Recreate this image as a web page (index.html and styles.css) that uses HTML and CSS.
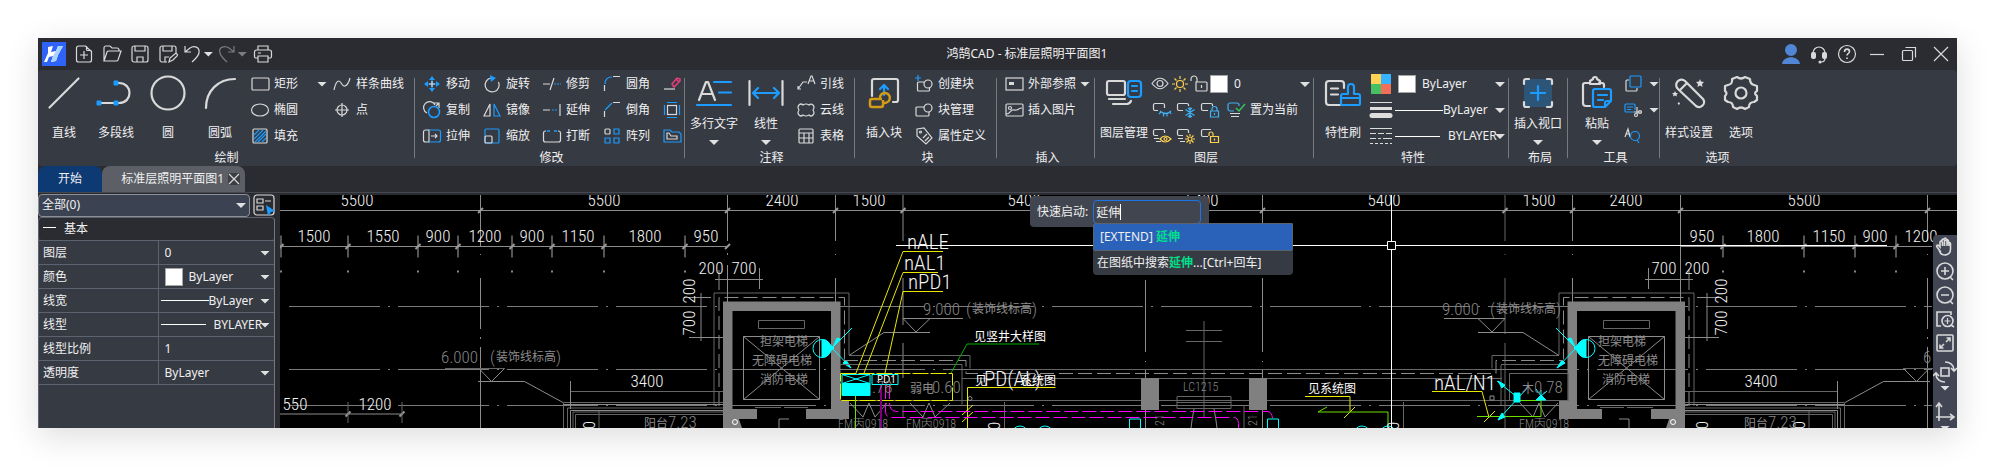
FILE: index.html
```html
<!DOCTYPE html>
<html lang="zh-CN">
<head>
<meta charset="utf-8">
<title>鸿鹄CAD - 标准层照明平面图1</title>
<link rel="stylesheet" href="styles.css">
</head>
<body>
<main class="window">
  <header class="titlebar">
    <nav class="quick" aria-label="快速访问">
      <svg class="logo" viewBox="0 0 24 24"><rect width="24" height="24" fill="#2f62f6"/><path d="M6 5l5-1-2 6 5-1 2-5h5l-5 9-2 6-5 1 2-6-4 1-2 5H2l4-9z" fill="#fff"/><path d="M14 9l2-5h5l-5 9-2 6-5 1 2-6z" fill="#a9d3ff"/></svg>
      <button aria-label="新建"><svg viewBox="0 0 20 20"><path class="w" d="M11.500 2H4.500A2 2 0 0 0 2.500 4v12a2 2 0 0 0 2 2h11a2 2 0 0 0 2-2V7.500zM12.500 2v3.500a1 1 0 0 0 1 1h4M10 7v8M6 11h8"/></svg></button>
      <button aria-label="打开"><svg viewBox="0 0 20 20"><path class="w" d="M2 17V4a2 2 0 0 1 2-2h4l2 2h5a2 2 0 0 1 2 2v1M2 17h12a2 2 0 0 0 2-1l3-9H7a2 2 0 0 0-2 1z"/></svg></button>
      <button aria-label="保存"><svg viewBox="0 0 20 20"><path class="w" d="M4 2h12a2 2 0 0 1 2 2v12a2 2 0 0 1-2 2H4a2 2 0 0 1-2-2V4a2 2 0 0 1 2-2zM5 2v5h10V2M7 18v-5h6v5"/></svg></button>
      <button aria-label="另存为"><svg viewBox="0 0 20 20"><path class="w" d="M9 18H4a2 2 0 0 1-2-2V4a2 2 0 0 1 2-2h12a2 2 0 0 1 2 2v5M5 2v5h9V2M7 18v-5h4M11 18l1-4 6-5 2 2-5 5z"/></svg></button>
      <button class="split" aria-label="撤销"><svg viewBox="0 0 20 20"><path class="w" d="M2 2v6h6M2 8l5-4c4-3 10-1 9 5-1 4-4 6-7 9"/></svg><i class="caret"></i></button>
      <button class="split faded" aria-label="重做"><svg viewBox="0 0 20 20"><path class="w" d="M17 2v6h-6M17 8l-5-4C8 1 1 3 3 9c1 4 4 6 7 9"/></svg><i class="caret"></i></button>
      <button aria-label="打印"><svg viewBox="0 0 20 20"><path class="w" d="M5 6V2h10v4M5 14H3a1.500 1.500 0 0 1-1.500-1.500V8A2 2 0 0 1 3.500 6h13a2 2 0 0 1 2 2v4.500A1.500 1.500 0 0 1 17 14h-2M5 12h10v6H5zM5 9h3"/></svg></button>
    </nav>
    <h1 class="title">鸿鹄CAD - 标准层照明平面图1</h1>
    <nav class="winctl" aria-label="窗口">
      <button aria-label="用户"><svg viewBox="0 0 20 20"><path fill="#5186d6" d="M10 0a6 6 0 1 1 0 12A6 6 0 0 1 10 0zM1 20c1-9 17-9 18 0z"/></svg></button>
      <button aria-label="客服"><svg viewBox="0 0 20 20"><path class="w" d="M4 9a6 6 0 0 1 12 0M16 14c0 3-2 4-4 4"/><rect x="2" y="8" width="5" height="7" rx="2" fill="#d9d9d9"/><rect x="13" y="8" width="5" height="7" rx="2" fill="#d9d9d9"/><circle cx="11" cy="18" r="1.500" fill="#d9d9d9"/></svg></button>
      <button aria-label="帮助"><svg viewBox="0 0 20 20"><circle class="w" cx="10" cy="10" r="8.500"/><path class="w k" d="M7.500 8c0-4 5-3.500 5-.5 0 2-2.500 2-2.500 4M10 13.500v1.500"/></svg></button>
      <button class="wide" aria-label="最小化"><svg viewBox="0 0 20 20"><path class="w" d="M3 10.500h14"/></svg></button>
      <button class="wide" aria-label="还原"><svg viewBox="0 0 20 20"><rect class="w" x="3.500" y="6.500" width="10" height="10" rx="1"/><path class="w" d="M6.500 3.500h10v10"/></svg></button>
      <button class="wide" aria-label="关闭"><svg viewBox="0 0 20 20"><path class="w" d="M3 3l14 14M17 3L3 17"/></svg></button>
    </nav>
  </header>

  <section class="ribbon" aria-label="功能区">
    <section class="group g-draw">
      <div class="tools">
        <button class="big"><svg viewBox="0 0 40 40"><path class="w k2" d="M5.500 34.500l29-29"/></svg>直线</button>
        <button class="big"><svg viewBox="0 0 40 40"><path class="w k2" d="M3 30h20c14 0 14-20 0-20h-3"/><path fill="#1c9cff" d="M1 28h4v4H1zM18 28h4v4h-4zM18 8h4v4h-4z" stroke="#1c9cff"/></svg>多段线</button>
        <button class="big"><svg viewBox="0 0 40 40"><circle class="w k2" cx="20" cy="20" r="16.500"/></svg>圆</button>
        <button class="big"><svg viewBox="0 0 40 40"><path class="w k2" d="M6 35C6 18 18 6 35 6"/></svg>圆弧</button>
        <div class="col c-shape">
          <button class="sm"><svg viewBox="0 0 20 20"><rect class="w" x="2" y="4" width="17" height="12" rx="1"/></svg>矩形<i class="caret far"></i></button>
          <button class="sm"><svg viewBox="0 0 20 20"><ellipse class="w" cx="10" cy="10" rx="8.500" ry="6"/></svg>椭圆</button>
          <button class="sm"><svg viewBox="0 0 20 20"><rect class="w" x="3" y="3" width="14" height="14" rx="1"/><path class="b" d="M4 9l5-5M4 13l9-9M5 16L16 5M8 16l8-8M12 16l4-4"/></svg>填充</button>
        </div>
        <div class="col">
          <button class="sm"><svg viewBox="0 0 20 20"><path class="w" d="M2 16c1-5 3-9 5-9s3 6 6 5 4-4 5-8"/></svg>样条曲线</button>
          <button class="sm"><svg viewBox="0 0 20 20"><circle class="w" cx="10" cy="10" r="5"/><path class="w" d="M10 3v14M3 10h14"/></svg>点</button>
        </div>
      </div>
      <h2>绘制</h2>
    </section>

    <section class="group g-modify">
      <div class="tools">
        <div class="col">
          <button class="sm"><svg viewBox="0 0 20 20"><path class="b" d="M10 3v14M3 10h14"/><path fill="#1c9cff" d="M10 2l3 4H7zM10 18l3-4H7zM2 10l4-3v6zM18 10l-4-3v6z"/><path class="w" d="M10 7v6M7 10h6"/></svg>移动</button>
          <button class="sm"><svg viewBox="0 0 20 20"><path class="w" d="M5 13a6 6 0 1 1 8-8M12 3h5v5M17 3l-3 3"/><circle class="b k" cx="12" cy="12" r="5.500"/></svg>复制</button>
          <button class="sm"><svg viewBox="0 0 20 20"><path class="w" d="M7 4H3.500A2 2 0 0 0 1.500 6v8a2 2 0 0 0 2 2H7zM9 10h6M13 8l2 2-2 2"/><path class="b" d="M7 4h9.500a2 2 0 0 1 2 2v8a2 2 0 0 1-2 2H7"/></svg>拉伸</button>
        </div>
        <div class="col">
          <button class="sm"><svg viewBox="0 0 20 20"><path class="w" d="M16.500 8A7 7 0 1 1 9 4"/><path fill="#1c9cff" d="M8 1l6 3-5 4z"/></svg>旋转</button>
          <button class="sm"><svg viewBox="0 0 20 20"><path class="w" d="M8 4v12H2z"/><path class="b" d="M12 4v12h6z"/></svg>镜像</button>
          <button class="sm"><svg viewBox="0 0 20 20"><rect class="b" x="3" y="3" width="14" height="14" rx="1"/><rect class="w" x="3" y="10" width="7" height="7" rx="1"/></svg>缩放</button>
        </div>
        <div class="col">
          <button class="sm"><svg viewBox="0 0 20 20"><path class="w" d="M1 10h7M8 16l4-12"/><path class="b" stroke-dasharray="2 1" d="M12 10h7"/></svg>修剪</button>
          <button class="sm"><svg viewBox="0 0 20 20"><path class="w" d="M1 10h7M18 4v12"/><path class="b" stroke-dasharray="2 1" d="M10 10h6"/></svg>延伸</button>
          <button class="sm"><svg viewBox="0 0 20 20"><path class="w" d="M4 5H3.500A2 2 0 0 0 1.500 7v7a2 2 0 0 0 2 2h13a2 2 0 0 0 2-2V7a2 2 0 0 0-2-2H16"/><path class="b k" d="M5 5h3M12 5h3"/></svg>打断</button>
        </div>
        <div class="col">
          <button class="sm"><svg viewBox="0 0 20 20"><path class="b" d="M3 10c0-5 3-7 7-7"/><path class="w" d="M2.500 17v-6M11 2.500h7"/></svg>圆角</button>
          <button class="sm"><svg viewBox="0 0 20 20"><path class="b" d="M3 10l7-7"/><path class="w" d="M2.500 17v-6M11 2.500h7"/></svg>倒角</button>
          <button class="sm"><svg viewBox="0 0 20 20"><rect class="w" x="3" y="3" width="5" height="5" rx="1"/><path class="b" d="M12 3h5v5h-5zM12 12h5v5h-5zM3 12h5v5H3z"/></svg>阵列</button>
        </div>
        <div class="col icons">
          <button class="sm" aria-label="删除"><svg viewBox="0 0 20 20"><path class="w" d="M2 15h11"/><path d="M10 10l5-6 3 1v2l-6 6zM14 5l3 3" fill="none" stroke="#e83e7b" stroke-width="1.500"/></svg></button>
          <button class="sm" aria-label="偏移"><svg viewBox="0 0 20 20"><rect class="w" x="5.500" y="5.500" width="9" height="9"/><path class="b" d="M5 2.500h10M5 17.500h10M2.500 5v10M17.500 5v10"/></svg></button>
          <button class="sm" aria-label="编辑"><svg viewBox="0 0 20 20"><path class="b" d="M2 4h6l2 2h7l2 2v8H2z"/><path class="w" d="M5 7h2l2 3h6v3H5z"/></svg></button>
        </div>
      </div>
      <h2>修改</h2>
    </section>

    <section class="group g-note">
      <div class="tools">
        <button class="big"><svg viewBox="0 0 40 40"><path class="w k2" d="M5 27L12 9h2l7 18M8 21h10"/><path class="b k2" d="M20 9h17M25 19.500h12M3 32h34"/></svg>多行文字<i class="caret"></i></button>
        <button class="big"><svg viewBox="0 0 40 40"><path class="w k2" d="M3.500 8v24M36.500 8v24"/><path class="b k2" d="M7 20h26M12 15l-5 5 5 5M28 15l5 5-5 5"/></svg>线性<i class="caret"></i></button>
        <div class="col">
          <button class="sm"><svg viewBox="0 0 20 20"><path class="w" d="M2 15l5-7h4M2 12v3h3M12 10l3-8h1l3 8M13 7h5"/></svg>引线</button>
          <button class="sm"><svg viewBox="0 0 20 20"><path class="w" d="M3 5q2-2 4 0q3-2 6 0q2-2 4 0q2 2 0 5q2 3 0 5q-2 2-4 0q-3 2-6 0q-2 2-4 0q-2-2 0-5q-2-3 0-5"/></svg>云线</button>
          <button class="sm"><svg viewBox="0 0 20 20"><rect class="w" x="3" y="3" width="14" height="14" rx="1"/><path class="w" d="M3 7h14M3 12h14M8 7v10M13 7v10"/></svg>表格</button>
        </div>
      </div>
      <h2>注释</h2>
    </section>

    <section class="group g-block">
      <div class="tools">
        <button class="big"><svg viewBox="0 0 40 40"><path class="w k2" d="M8 23V8a2 2 0 0 1 2-2h22a2 2 0 0 1 2 2v19a2 2 0 0 1-2 2h-3"/><path class="b k2" d="M20 22V13M16 16l4-4 4 4"/><path d="M18 26H8a2 2 0 0 0-2 2v4a2 2 0 0 0 2 2h9a2 2 0 0 0 2-2v-5M18 29a5 5 0 1 0-2-3" fill="none" stroke="#d49b16" stroke-width="2.500"/></svg>插入块</button>
        <div class="col">
          <button class="sm"><svg viewBox="0 0 20 20"><path class="w" d="M10 8H4.500A1 1 0 0 0 3.500 9v7a1 1 0 0 0 1 1h10a1 1 0 0 0 1-1v-3"/><circle class="w" cx="14" cy="10" r="4"/><path class="b" d="M4 1v6M1 4h6"/></svg>创建块</button>
          <button class="sm"><svg viewBox="0 0 20 20"><path class="w" d="M10 7H3a1 1 0 0 0-1 1v7a1 1 0 0 0 1 1h11a1 1 0 0 0 1-1v-3"/><circle class="w" cx="14" cy="8" r="4"/></svg>块管理</button>
          <button class="sm"><svg viewBox="0 0 20 20"><path class="w" d="M3 3l7-1 8 10-6 6L3 10z"/><circle class="w" cx="6.500" cy="6" r="1"/><path class="w" d="M9 12l4-4M11 15l4-4"/></svg>属性定义</button>
        </div>
      </div>
      <h2>块</h2>
    </section>

    <section class="group g-insert">
      <div class="tools">
        <div class="col">
          <button class="sm"><svg viewBox="0 0 20 20"><rect class="w" x="2" y="4" width="17" height="12"/><path fill="#d9d9d9" d="M5 8h5v3H5z"/></svg>外部参照<i class="caret"></i></button>
          <button class="sm"><svg viewBox="0 0 20 20"><rect class="w" x="2" y="4" width="17" height="12" rx="1"/><path class="w" d="M2 14c5 0 4-5 8-4s4-2 8-2"/><circle class="w" cx="6" cy="8" r="1.500"/></svg>插入图片</button>
        </div>
      </div>
      <h2>插入</h2>
    </section>

    <section class="group g-layer">
      <div class="tools">
        <button class="big"><svg viewBox="0 0 40 40"><rect class="w k2" x="3" y="8" width="18" height="14" rx="2"/><path class="w k2" d="M5 26h16M9 31h14a5 5 0 0 0 4-3"/><rect class="b k2" x="24" y="8" width="13" height="16" rx="3"/><path class="b k2" d="M28 13h5M28 18h5"/></svg>图层管理</button>
        <div class="col">
          <div class="row">
            <svg class="i" viewBox="0 0 20 20"><path class="w" d="M2 9.500Q10-1 18 9.500Q10 20 2 9.500z"/><circle class="w" cx="10" cy="9.500" r="3"/></svg>
            <svg class="i" viewBox="0 0 20 20"><circle class="y" cx="10" cy="10" r="3.500"/><path class="y" d="M10 2v3M10 15v3M2 10h3M15 10h3M4.500 4.500l2 2M13.500 13.500l2 2M15.500 4.500l-2 2M6.500 13.500l-2 2"/></svg>
            <svg class="i" viewBox="0 0 20 20"><path class="w" d="M6 8h10a1 1 0 0 1 1 1v7a1 1 0 0 1-1 1H7a1 1 0 0 1-1-1zM7 8V5a3 3 0 0 0-6 0v2M11.500 11v3"/></svg>
            <label class="pick layerpick"><span class="swatch"></span><select aria-label="当前图层"><option>0</option></select></label>
          </div>
          <div class="row tight">
            <button class="i" aria-label="关闭图层"><svg viewBox="0 0 20 20"><path class="w" d="M6 10.500H3a1.500 1.500 0 0 1-1.500-1.500V5A1.500 1.500 0 0 1 3 3.500h8A1.500 1.500 0 0 1 12.500 5v3"/><path class="b l" d="M8 11q6 5 11 0M9 12l-2 2M11.500 13.500v3M15 13.500v3M18 12l1 2"/></svg></button>
            <button class="i" aria-label="冻结图层"><svg viewBox="0 0 20 20"><path class="w" d="M7 10.500H3a1.500 1.500 0 0 1-1.500-1.500V5A1.500 1.500 0 0 1 3 3.500h8A1.500 1.500 0 0 1 12.500 5v1"/><path class="b l" d="M14 7v11M9.500 9.500l9 6M9.500 15.500l9-6M12 8l2 2 2-2M12 17l2-2 2 2"/></svg></button>
            <button class="i" aria-label="锁定图层"><svg viewBox="0 0 20 20"><path class="w" d="M8 10.500H3a1.500 1.500 0 0 1-1.500-1.500V5A1.500 1.500 0 0 1 3 3.500h8A1.500 1.500 0 0 1 12.500 5v1"/><path class="b l" d="M10.500 11h8v6h-8zM12 11V9a2.500 2.500 0 0 1 5 0v2M14.500 13v2"/></svg></button>
            <button class="sm cur"><svg viewBox="0 0 20 20"><path class="b l" d="M8 11H4a2 2 0 0 1-2-2V5a2 2 0 0 1 2-2h7a2 2 0 0 1 2 2v1"/><path class="w" d="M4 13.500h10M5 16.500h8"/><path d="M10 8l3 3 6-7" fill="none" stroke="#35c759" stroke-width="1.500"/></svg>置为当前</button>
          </div>
          <div class="row tight">
            <button class="i" aria-label="打开图层"><svg viewBox="0 0 20 20"><path class="w" d="M6 9.500H3A1.500 1.500 0 0 1 1.500 8V5A1.500 1.500 0 0 1 3 3.500h8A1.500 1.500 0 0 1 12.500 5v2M2 12.500h5M4 15.500h5"/><path class="y" d="M8 13q5-6 11 0q-6 6-11 0z"/><circle class="y" cx="13.500" cy="13" r="1.500"/></svg></button>
            <button class="i" aria-label="解冻图层"><svg viewBox="0 0 20 20"><path class="w" d="M7 9.500H3A1.500 1.500 0 0 1 1.500 8V5A1.500 1.500 0 0 1 3 3.500h8A1.500 1.500 0 0 1 12.500 5v2M2 12.500h5M4 15.500h5"/><circle class="y" cx="14" cy="13" r="2"/><path class="y" d="M14 8v2M14 16v2M9 13h2M17 13h2M10.500 9.500l1.500 1.500M17.500 9.500L16 11M10.500 16.500L12 15M17.500 16.500L16 15"/></svg></button>
            <button class="i" aria-label="解锁图层"><svg viewBox="0 0 20 20"><path class="w" d="M8 10.500H3a1.500 1.500 0 0 1-1.500-1.500V5A1.500 1.500 0 0 1 3 3.500h8"/><path class="y" d="M10.500 10.500h8v6h-8zM13 10.500V8a2 2 0 0 0-4 0v2M14.500 12.500v2"/></svg></button>
          </div>
        </div>
      </div>
      <h2>图层</h2>
    </section>

    <section class="group g-prop">
      <div class="tools">
        <button class="big"><svg viewBox="0 0 40 40"><path class="w k2" d="M17 32H6a3 3 0 0 1-3-3V11a3 3 0 0 1 3-3h12a3 3 0 0 1 3 3v4M8 15.500h7M8 21.500h7"/><path class="b k2" d="M18 31V23a2 2 0 0 1 2-2h5v-7a3 3 0 0 1 6 0v7h4a2 2 0 0 1 2 2v8a1 1 0 0 1-1 1H19a1 1 0 0 1-1-1zM18 25h19"/></svg>特性刷</button>
        <div class="props">
          <div class="row"><svg class="pi" viewBox="0 0 24 20"><path fill="#ffd155" d="M2 0h10v10H2z"/><path fill="#36b4ff" d="M12 0h10v10H12z"/><path fill="#45c163" d="M2 10h10v10H2z"/><path fill="#f07059" d="M12 10h10v10H12z"/></svg><label class="pick"><span class="swatch"></span><select aria-label="颜色"><option>ByLayer</option></select></label></div>
          <div class="row"><svg class="pi" viewBox="0 0 24 20"><path stroke="#ddd" d="M1 2.500h22"/><path stroke="#ddd" stroke-width="3" d="M1 8.500h22"/><path stroke="#ddd" stroke-width="5" stroke-linecap="round" d="M3 15.500h18"/></svg><label class="pick"><span class="line"></span><select aria-label="线宽"><option>ByLayer</option></select></label></div>
          <div class="row"><svg class="pi" viewBox="0 0 24 20"><path stroke="#ddd" stroke-width="1" d="M1 2.500h22M1 7.500h6m2 0h6m2 0h6M1 12.500h6m2 0h3m2 0h9M1 17.500h3m2 0h3m2 0h3m2 0h3m2 0h2"/></svg><label class="pick"><span class="line short"></span><select aria-label="线型"><option>BYLAYER</option></select></label></div>
        </div>
      </div>
      <h2>特性</h2>
    </section>

    <section class="group g-layout">
      <div class="tools">
        <button class="big"><svg viewBox="0 0 40 40"><rect x="6" y="6" width="28" height="28" rx="2" fill="#2d5578"/><path class="b k2" d="M20 13v14M13 20h14"/><path class="w k2" d="M6 11V8a2 2 0 0 1 2-2h3M29 6h3a2 2 0 0 1 2 2v3M34 29v3a2 2 0 0 1-2 2h-3M11 34H8a2 2 0 0 1-2-2v-3"/></svg>插入视口<i class="caret"></i></button>
      </div>
      <h2>布局</h2>
    </section>

    <section class="group g-tool">
      <div class="tools">
        <button class="big"><svg viewBox="0 0 40 40"><path class="w k2" d="M13 33H9a3 3 0 0 1-3-3V12a2 2 0 0 1 2-2h5M22 10h3a2 2 0 0 1 2 2v2M13 8l3-2a2 2 0 0 1 4 0l3 2v3H13z"/><path class="b k2" d="M18 16h14a2 2 0 0 1 2 2v10l-6 6H18a2 2 0 0 1-2-2V18a2 2 0 0 1 2-2zM21 22h9M21 27h5M34 28h-4a2 2 0 0 0-2 2v4"/></svg>粘贴<i class="caret"></i></button>
        <div class="icons">
          <button class="sm" aria-label="复制"><svg viewBox="0 0 20 20"><path class="w" d="M6 6H4a1 1 0 0 0-1 1v9a1 1 0 0 0 1 1h9a1 1 0 0 0 1-1v-2"/><rect class="b" x="7" y="2" width="11" height="11" rx="1"/></svg><i class="caret"></i></button>
          <button class="sm" aria-label="剪切"><svg viewBox="0 0 20 20"><path class="b" d="M11 12H3a1 1 0 0 1-1-1V5a1 1 0 0 1 1-1h8a1 1 0 0 1 1 1v5M4 7h6M4 9.500h4"/><path class="w" d="M14 7v7M11 12h7"/><circle class="w" cx="13" cy="15" r="1.500"/><circle class="w" cx="17" cy="12" r="1.500"/></svg><i class="caret"></i></button>
          <button class="sm" aria-label="查找"><svg viewBox="0 0 20 20"><path class="w" d="M2 11l3-8 2 8M3 8h4"/><circle class="b" cx="12" cy="10" r="4.500"/><path class="b" d="M14 14l2 3"/></svg></button>
        </div>
      </div>
      <h2>工具</h2>
    </section>

    <section class="group g-opt">
      <div class="tools">
        <button class="big"><svg viewBox="0 0 40 40"><path class="w k2" d="M9 16a5 5 0 0 1 7-8l18 18a5 5 0 0 1-7 7zM11 17l7-7"/><path fill="#ddd" d="M31 6l1 2.500 3 .5-2 2 .5 3L31 12.500 28.500 14l.5-3-2-2 3-.5zM6 18l1 2 2 0-1.500 1.500.5 2L6 22.500l-2 1 .5-2L3 20h2zM10 29l1 1.500-1 1.500-1.500-1.500z"/></svg>样式设置</button>
        <button class="big"><svg viewBox="0 0 40 40"><path class="w k2" d="M16 4q4 3 8 0l5 2q0 5 4 6l3 1v5q-4 2 0 5v4l-3 2q-5 0-5 5l-4 2q-4-3-8 0l-4-2q0-5-5-5l-3-2v-4q3-3 0-5v-5l3-1q5-1 4-6z"/><circle class="w k2" cx="20" cy="20" r="5.500"/></svg>选项</button>
      </div>
      <h2>选项</h2>
    </section>
  </section>

  <nav class="tabs" aria-label="文档">
    <button class="tab start">开始</button>
    <div class="tab doc"><span>标准层照明平面图1</span><button class="x" aria-label="关闭"><svg viewBox="0 0 12 12"><path class="w" d="M1 1l10 10M11 1L1 11"/></svg></button></div>
  </nav>

  <div class="work">
    <aside class="side">
      <div class="sel">
        <label class="pick all"><select aria-label="选择集"><option>全部(0)</option></select></label>
        <button class="filter" aria-label="快速选择"><svg viewBox="0 0 22 22"><rect class="w" x="1" y="1" width="20" height="20" rx="3"/><path class="w" d="M4 5h6v4H4zM4 12h6v4H4zM12 7h6"/><path fill="#1c9cff" d="M13 11l9 6-4 1-3 4z"/></svg></button>
      </div>
      <section class="panel">
        <h2 class="ph"><i class="minus"></i>基本</h2>
        <table>
          <tr><th scope="row">图层</th><td><label class="pick"><select aria-label="图层"><option>0</option></select></label></td></tr>
          <tr><th scope="row">颜色</th><td><label class="pick"><span class="swatch"></span><select aria-label="颜色"><option>ByLayer</option></select></label></td></tr>
          <tr><th scope="row">线宽</th><td><label class="pick ln"><span class="line"></span><select aria-label="线宽"><option>ByLayer</option></select></label></td></tr>
          <tr><th scope="row">线型</th><td><label class="pick ln"><span class="line short"></span><select aria-label="线型"><option>BYLAYER</option></select></label></td></tr>
          <tr><th scope="row">线型比例</th><td><input aria-label="线型比例" value="1"></td></tr>
          <tr><th scope="row">透明度</th><td><label class="pick"><select aria-label="透明度"><option>ByLayer</option></select></label></td></tr>
        </table>
      </section>
    </aside>

    <section class="canvas" aria-label="图纸">
      <svg class="dwg" viewBox="280 195 1677 233" preserveAspectRatio="xMinYMin slice">
        <defs>
          <path id="tk" d="M-2.500 2.500l5-5" stroke="#999" stroke-width="2"/>
          <g id="dt"><path d="M0-11V11" stroke="#555" stroke-width="2"/><path d="M-2.500 2.500l5-5" stroke="#999" stroke-width="2"/><path d="M-1 25h2" stroke="#888" stroke-width="2"/></g>
          <g id="shaft">
            <path class="g2" d="M714 406V293H849v62"/><path class="g" stroke-dasharray="14 5" d="M719 406V297.500H844.500v62"/>
            <path fill="#808080" d="M723 301.500h117.500V401H849v18h-43v-10h25V311H732.500v98H757v10h-18l3 9h-19z"/>
            <path class="g2" d="M758.500 320.500h46v8h-46z"/><path class="g" d="M743.500 336.500h76v63h-76zl76 63M743.500 399.500l76-63"/>
            <path class="g2" d="M755 407.500h26M784 407.500h24"/><path class="g" d="M779 428v-9h10"/><circle class="wt" cx="735" cy="422" r="2.500"/>
            <path class="g" d="M715 279.500h48M719 270v20M727.500 265v37M759.500 268v21M701 293v48M689 297.500h22M689 337.500h34"/>
          </g>
          <g id="balcony">
            <path class="g" d="M491.500 381.500L478.500 368M491.500 381.500l13.500-13.500M478 381.500h46.500L563 402.500"/>
            <path class="g2" d="M445 368.500h60M563.500 428v-25.500H723M567.500 428v-20H723M573 428v-16H723M575.500 428v-13.500H723M599 410v18"/>
            <path class="g" d="M563 404.500h160M570.500 428v-17.500H723"/>
            <path class="g2" d="M570 391.500h153"/><path class="g" d="M570.500 381v28"/>
          </g>
          <g id="lamp" class="cy"><circle cx="822" cy="348.500" r="9"/><path d="M852 328l-20 20 19 20"/><path fill="#0ff" d="M822 339.500a9 9 0 0 1 0 18zM833 347l7-8-3-1zM851 368l-8-5 3-3zM829 344l5 4-5 4z"/></g>
        </defs>

        <path class="axis" d="M289 306.500H1932M289 369.500H1932M289 405.500H1932"/>
        <g class="g">
          <path d="M280 210.500h1677M280 246.500h448M1680 246.500h252M280 414h122"/>
          <path d="M480.500 195v51M480.500 254v1M480.500 278v51M480.500 337v2M480.500 347v81M727.500 195v46M727.500 253v2M835.500 195v46M835.500 254v1M835.500 278v24M903 195v46M903 278v47M903 343v35M1145.500 280v72M1145.500 361v1M1145.500 370v58M1262.500 195v46M1262.500 278v74M1262.500 361v1M1262.500 370v58M1572.500 195v46M1572.500 254v1M1572.500 278v24M1680.500 195v70M1927.500 195v46M1927.500 254v1M1927.500 278v51M1927.500 337v2M1927.500 347v81"/>
        </g>
        <path class="g2" d="M1505 195v46M1505 254v1M1505 278v56M1505 343v85"/>
        <g><use href="#tk" x="480.500" y="210.500"/><use href="#tk" x="727.500" y="210.500"/><use href="#tk" x="835.500" y="210.500"/><use href="#tk" x="903" y="210.500"/><use href="#tk" x="1262.500" y="210.500"/><use href="#tk" x="1505" y="210.500"/><use href="#tk" x="1572.500" y="210.500"/><use href="#tk" x="1680.500" y="210.500"/><use href="#tk" x="1927.500" y="210.500"/>
          <use href="#dt" x="281" y="246.500"/><use href="#dt" x="348" y="246.500"/><use href="#dt" x="418" y="246.500"/><use href="#dt" x="458" y="246.500"/><use href="#dt" x="512" y="246.500"/><use href="#dt" x="552" y="246.500"/><use href="#dt" x="604" y="246.500"/><use href="#dt" x="685" y="246.500"/><use href="#tk" x="727.500" y="246.500"/>
          <use href="#dt" x="1723" y="246.500"/><use href="#dt" x="1804" y="246.500"/><use href="#dt" x="1855" y="246.500"/><use href="#dt" x="1896" y="246.500"/><use href="#tk" x="348" y="414"/><use href="#tk" x="402" y="414"/></g>
        <path class="g2" d="M348 402v21M402 402v21"/>

        <use href="#shaft"/><use href="#balcony"/><use href="#lamp"/>
        <g transform="translate(2408 0) scale(-1 1)"><use href="#shaft"/><use href="#balcony"/><use href="#lamp"/></g>

        <g class="g2">
          <path d="M849 355.500h121v13M840 364.500h122v40M970 369.500h522M962 378.500h540M840 400.500h720M903 418v-13M1004.500 402v26M1177 396.500h54v12h-54zM1177 402.500h54M1177 405.500h54M1204 321v97M1186 330.500h36M1186 341.500h36M1244 405v23M1403.500 402v26M1559 355.500h-67v13M1501 365v40M1559 364.500h-58M1509.500 388.500v-15h59v27h-59z"/>
        </g>
        <g class="g">
          <path d="M903 318.500h60M903 318.500l13 13.500 14-13.500M884 332.500h46M884 332.500L849 355.500M1444 318.500h61l-13 13.500-14-13.500M1478 332.500h45L1559 355.500"/>
          <path d="M850 403l13 14 6-14 6 14 12-14M910 403l13 14 6-14 6 14 15-14M1520 403l13 14 6-14 6 14 13-14M1194 409q-2 10-3 19M1214 409q2 10 3 19"/>
          <path stroke-dasharray="14 5" d="M844 360.500h122v13H1496v-13h67"/>
          <circle cx="970" cy="398.500" r="2"/><path d="M1490 396h4v4h-4z"/>
        </g>
        <path fill="#808080" d="M1141 378h18v32h-18zM1249 378h18v32h-18z"/>

        <g class="ye">
          <path d="M856 373L903 251.500h40M864 373L903 272.500h35M885 373L903 291.500h40"/>
          <path stroke-dasharray="16 2" d="M840.500 373.500h112v27h-112z"/>
          <path d="M967.500 428v-40.500h88M962 415l11-10M962 422l11-10M1305 396.500h45V411M1344 418l11-11M1432 391.500h50l7 26M1484 422l11-11"/>
        </g>
        <g class="gr"><path stroke="#00b000" d="M951 373l16-29h72"/><path d="M855.500 395v33M1327 407l-9 5h70v16M1477 416.500h64V400.500h-24"/></g>
        <g class="ma"><path stroke-dasharray="14 4" d="M889.500 385v18q0 8 7 8.500H1267q5 0 5.500 7M885.500 385v26q0 6 5 6.500H1234q4 0 4.500 6v5"/><path stroke="#800080" stroke-width="2" d="M881 385v43"/></g>
        <g class="cy">
          <path d="M842 374.500h28v9h-28zl28 9M842 383.500l28-9M872 374.500h26v10h-26zM1129.500 428v-9h11v9M1267.500 428v-9h11v9"/>
          <path fill="#0ff" d="M842 383.500h28v12h-28z"/>
          <circle cx="1020" cy="434" r="8"/><circle cx="1045" cy="434" r="8"/><circle cx="1362" cy="434" r="8"/><circle cx="1388" cy="434" r="8"/>
          <path d="M1497 381l20 16M1529 386l-31 34M1536 389l5 7 6-5M1541 390v8"/><path fill="#0ff" d="M1514 393h6v9h-6zM1536 400l5-5 5 5zM1498 381l7 4-3 3zM1498 420l7-3-3-4z"/>
        </g>

        <g class="dim">
          <text x="357" y="206">5500</text><text x="604" y="206">5500</text><text x="782" y="206">2400</text><text x="869" y="206">1500</text><text x="1024" y="206">5400</text><text x="1202" y="206">5400</text><text x="1384" y="206">5400</text><text x="1539" y="206">1500</text><text x="1626" y="206">2400</text><text x="1804" y="206">5500</text>
          <text x="314" y="242">1500</text><text x="383" y="242">1550</text><text x="438" y="242">900</text><text x="485" y="242">1200</text><text x="532" y="242">900</text><text x="578" y="242">1150</text><text x="645" y="242">1800</text><text x="706" y="242">950</text>
          <text x="1702" y="242">950</text><text x="1763" y="242">1800</text><text x="1829" y="242">1150</text><text x="1875" y="242">900</text><text x="1921" y="242">1200</text>
          <text x="711" y="274">200</text><text x="744" y="274">700</text><text x="1664" y="274">700</text><text x="1697" y="274">200</text>
          <text x="647" y="387">3400</text><text x="1761" y="387">3400</text><text x="295" y="410">550</text><text x="375" y="410">1200</text>
          <text transform="translate(695 291) rotate(-90)">200</text><text transform="translate(695 323) rotate(-90)">700</text>
          <text transform="translate(1727 291) rotate(-90)">200</text><text transform="translate(1727 323) rotate(-90)">700</text>
          <text transform="translate(595 425) rotate(-90)">0</text><text transform="translate(1000 430) rotate(-90)">00</text><text transform="translate(1399 430) rotate(-90)">00</text><text transform="translate(1708 425) rotate(-90)">0</text><text transform="translate(1805 425) rotate(-90)">0</text>
        </g>
        <g class="nm"><text x="907" y="249">nALE</text><text x="904" y="270">nAL1</text><text x="908" y="289">nPD1</text><text x="984" y="386">PD(AL)</text><text x="1434" y="390">nAL/N1</text></g>
        <g class="cn white"><text x="974" y="341">见竖井大样图</text><text x="975" y="385">见</text><text x="1020" y="385">系统图</text><text x="1308" y="393">见系统图</text><text class="pd" x="877" y="383">PD1</text></g>
        <g class="cn">
          <text x="760" y="346">担架电梯</text><text x="752" y="365">无障碍电梯</text><text x="760" y="384">消防电梯</text>
          <text x="1598" y="346">担架电梯</text><text x="1598" y="365">无障碍电梯</text><text x="1602" y="384">消防电梯</text>
          <text x="496" y="361">装饰线标高</text><text x="972" y="313">装饰线标高</text><text x="1496" y="313">装饰线标高</text>
          <text x="910" y="393">弱电</text><text x="1522" y="393">木</text><text x="644" y="428">阳台</text><text x="1744" y="428">阳台</text>
        </g>
        <g class="num">
          <text x="441" y="363">6.000</text><text x="490" y="363">(</text><text x="556" y="363">)</text><text x="923" y="315">9.000</text><text x="966" y="315">(</text><text x="1032" y="315">)</text><text x="1442" y="315">9.000</text><text x="1490" y="315">(</text><text x="1556" y="315">)</text><text x="1923" y="363">6</text>
          <text x="872" y="393">.78</text><text x="932" y="393">0.60</text><text x="1534" y="393">0.78</text><text x="668" y="428">7.23</text><text x="1768" y="428">7.23</text>
        </g>
        <g class="num s"><text x="838" y="428">FM丙0918</text><text x="906" y="428">FM丙0918</text><text x="1519" y="428">FM丙0918</text><text x="1183" y="391">LC1215</text><text transform="translate(1164 426) rotate(-90)">21</text><text transform="translate(1257 426) rotate(-90)">21</text></g>

        <path stroke="#fff" fill="none" d="M896 245.500h491M1396 245.500h491M1391.500 195v46M1391.500 250v178M1387.500 241.500h8v8h-8z"/>
      </svg>

      <form class="launch">
        <label for="ql">快速启动:</label>
        <span class="field"><input id="ql" value="延伸" autocomplete="off"><i class="cursor"></i></span>
        <ul class="hits">
          <li class="on">[EXTEND] <b>延伸</b></li>
          <li>在图纸中搜索<b>延伸</b>...[Ctrl+回车]</li>
        </ul>
      </form>

      <nav class="view" aria-label="视图">
        <button aria-label="平移"><svg viewBox="0 0 20 20"><path class="w k" d="M5 14L2 10q-1-2 1-2l2 2V5q1-2 2 0V3q1-2 2 0V2q2-2 2 0v1q2-1 2.500 1v2q2-1 2 1v5c0 7-9 8-11 2zM7.500 5v4M9.500 3v6M12 3v6M14 5v4"/></svg></button>
        <button aria-label="放大"><svg viewBox="0 0 20 20"><circle class="w k" cx="10" cy="10" r="8"/><path class="w k" d="M10 6v8M6 10h8M15 16l3 3"/></svg></button>
        <button aria-label="缩小"><svg viewBox="0 0 20 20"><circle class="w k" cx="10" cy="10" r="8"/><path class="w k" d="M6 10h8M15 16l3 3"/></svg></button>
        <button aria-label="窗口缩放"><svg viewBox="0 0 20 20"><path class="w k" d="M6 17H2V3h14v3M16 16l3 2"/><circle class="w k" cx="12.500" cy="12" r="5.500"/><path class="w" d="M12.500 9v6M9.500 12h6"/></svg></button>
        <button aria-label="范围缩放"><svg viewBox="0 0 20 20"><rect class="w k" x="2" y="2" width="16" height="16" rx="1"/><path class="w k" d="M11 9l4-4M11.500 5H15v3.500M9 11l-4 4M5 11.500V15h3.500"/></svg></button>
        <button class="menu" aria-label="动态观察"><svg viewBox="0 0 24 24"><rect class="w k" x="8" y="8" width="8" height="8"/><path class="w k" d="M12 2c5 0 9 3 9 8M18 8l3 3 3-3M12 22c-5 0-9-3-9-8M0 16l3-3 3 3"/></svg><i class="caret"></i></button>
        <button class="menu" aria-label="坐标系"><svg viewBox="0 0 24 24"><path class="w k" d="M6 21V3M3 7l3-4 3 4M3 17h18M17 14l4 3-4 3"/></svg><i class="caret"></i></button>
      </nav>
    </section>
  </div>
</main>
</body>
</html>
```

FILE: styles.css
```css
* { box-sizing: border-box; }
body {
  margin: 0;
  padding: 38px;
  min-height: 100vh;
  display: flex;
  background: #fff;
  color: #f0f0f0;
  font: 12px/16px "Noto Sans", "Noto Sans CJK SC", sans-serif;
}
button, input, select { font: inherit; color: inherit; background: none; border: 0; padding: 0; margin: 0; outline: 0; }
h1, h2, ul { margin: 0; padding: 0; font: inherit; list-style: none; }
.window {
  flex: 1;
  min-width: 0;
  display: flex;
  flex-direction: column;
  background: #2b2c31;
  box-shadow: 0 8px 32px rgba(0, 0, 0, .14);
}
svg { display: block; flex: none; }
.w, .b, .y { fill: none; stroke: #d9d9d9; stroke-width: 1.2; }
.b { stroke: #1c9cff; }
.l { stroke: #3eb2f5; }
.y { stroke: #ffd24d; }
.k { stroke-width: 1.6; }
.k2 { stroke-width: 2.2; stroke-linecap: round; stroke-linejoin: round; }
.caret { flex: none; width: 10px; height: 5px; background: #e0e0e0; clip-path: polygon(0 0, 100% 0, 50% 100%); }

/* title bar */
.titlebar { height: 32px; display: flex; align-items: center; }
.quick, .winctl { display: flex; align-items: center; }
.quick { width: 239px; padding-left: 4px; }
.logo { width: 24px; height: 24px; margin-right: 4px; }
.quick button, .winctl button { width: 28px; height: 28px; display: flex; align-items: center; justify-content: center; }
.quick svg:not(.logo), .winctl svg { width: 20px; height: 20px; }
.quick .split { width: 34px; }
.faded { opacity: .45; }
.winctl .wide { width: 32px; }
.title { flex: 1; text-align: center; }

/* ribbon */
.ribbon { display: flex; height: 96px; background: #363a43; border-radius: 4px; }
.group { position: relative; flex: none; display: flex; flex-direction: column; padding: 1px 0 0 3px; }
.group:not(:last-child)::after { content: ""; position: absolute; right: 0; top: 8px; width: 1px; height: 80px; background: #777a80; }
.group h2 { text-align: center; line-height: 17px; }
.tools { display: flex; height: 78px; }
.big { flex: none; width: 52px; height: 78px; display: flex; flex-direction: column; align-items: center; padding-top: 2px; white-space: nowrap; gap: 12px; }
.big svg { width: 40px; height: 40px; }
.big:has(.caret) { gap: 3px; }
.big .caret { margin-top: 5px; }
.col { padding-left: 4px; }
.sm, .row { height: 26px; display: flex; align-items: center; gap: 4px; white-space: nowrap; }
.sm svg { width: 20px; height: 20px; }
.g-draw { width: 377px; padding-left: 0; }
.c-shape { width: 82px; }
.c-shape .far { margin-left: 15px; }
.g-modify { width: 270px; }
.g-modify .col:not(.icons) { width: 60px; }
.g-note { width: 170px; }
.g-block { width: 142px; }
.g-insert { width: 98px; }
.g-layer { width: 219px; }
.g-layer .col { flex: 1; padding-left: 0; }
.row { gap: 0; }
.i { width: 20px; height: 20px; }
.tight .i { width: 24px; padding-left: 2px; }
.tight .i svg { width: 20px; height: 20px; }
.cur { margin-left: 4px; }
.layerpick { flex: 1; }
.pick { position: relative; display: flex; align-items: center; min-width: 0; }
.pick::after { content: ""; position: absolute; right: 4px; top: 50%; margin-top: -2px; width: 10px; height: 5px; background: #e0e0e0; clip-path: polygon(0 0, 100% 0, 50% 100%); pointer-events: none; }
.pick select { appearance: none; flex: 1; min-width: 0; width: 0; line-height: 20px; }
.swatch { flex: none; width: 18px; height: 18px; margin-right: 6px; background: #fff; border: 1px solid #a5a5a5; }
.line { flex: none; width: 48px; height: 1px; background: #fff; }
.line.short { width: 45px; margin-right: 8px; }
.g-prop { width: 195px; }
.props { flex: 1; }
.props .row { gap: 2px; }
.props .pick { flex: 1; }
.props .swatch { margin-left: 3px; }
.pi { width: 24px; height: 20px; }
.g-layout { width: 59px; }
.g-tool { width: 92px; }
.g-tool .sm { gap: 6px; }
.g-opt { width: 112px; }

/* document tabs */
.tabs { display: flex; height: 27px; border-bottom: 1px solid #45484f; }
.tab { border-radius: 8px 8px 0 0; }
.start { width: 64px; background: #0e3a74; }
.doc { width: 143px; display: flex; align-items: center; justify-content: flex-end; gap: 4px; padding-right: 5px; background: #5c5f66; }
.x { width: 12px; height: 12px; background: #3c3e44; border-radius: 2px; }

/* property palette */
.work { flex: 1; display: flex; min-height: 0; }
.side { flex: none; width: 242px; display: flex; flex-direction: column; }
.sel { display: flex; height: 24px; gap: 3px; align-items: center; }
.all { width: 212px; height: 23px; padding-left: 3px; border: 1px solid #8b8f97; border-radius: 4px; background: #3b4252; }
.all::after { right: 3px; }
.filter, .filter svg { width: 22px; height: 22px; }
.panel { flex: 1; width: 237px; border: 1px solid #5d616c; border-right-color: #74777f; border-radius: 4px 4px 0 0; border-bottom: 0; background: #363a43; }
.ph { display: flex; align-items: center; gap: 8px; height: 22px; padding-left: 4px; background: #2b2c31; border-radius: 4px; }
.minus { width: 13px; height: 1px; margin-top: -4px; background: #fff; }
.panel table { width: 100%; border-collapse: collapse; table-layout: fixed; }
.panel tr { height: 24px; }
.panel th, .panel td { padding: 0 0 0 4px; border: 1px solid #5d6270; border-left: 0; border-right: 0; text-align: left; font-weight: 400; height: 24px; }
.panel th { width: 119px; border-right: 1px solid #5d6270; }
.panel td { padding-left: 6px; }
.panel td .pick::after { right: 4px; }
.panel .ln { margin-left: -4px; }
.panel input { width: 100%; }

/* drawing */
.canvas { position: relative; flex: 1; min-width: 0; margin-top: 2px; background: #000; overflow: hidden; }
.dwg { position: absolute; inset: 0; width: 100%; height: 100%; }
.g, .g2, .axis, .wt, .ye, .gr, .ma, .cy { fill: none; stroke: #8c8c8c; }
.g2 { stroke: #666; }
.axis { stroke: #7a7a7a; stroke-dasharray: 91 8 2 8; }
.wt { stroke: #fff; }
.ye { stroke: #e8e800; }
.gr { stroke: #6ee000; }
.ma { stroke: #f0f; }
.cy { stroke: #0ff; }
.dim, .nm, .num { font-family: "Liberation Sans Narrow", "Roboto Condensed", Roboto, "Noto Sans CJK SC", sans-serif; font-weight: 300; }
.dim { font-size: 17px; fill: #f4f4f4; text-anchor: middle; }
.nm { font-size: 21px; fill: #f4f4f4; }
.num { font-size: 17px; fill: #868686; }
.num.s { font-size: 12px; }
.cn { font-size: 12px; fill: #8c8c8c; }
.white { fill: #fff; }
.pd { font-size: 10px; }

/* command launcher */
.launch { position: absolute; left: 750px; top: 1px; width: 179px; height: 31px; display: flex; align-items: center; gap: 5px; padding-left: 7px; background: #41454f; border-radius: 4px; }
.field { position: relative; display: flex; align-items: center; }
.field input { width: 108px; height: 24px; padding-left: 2px; border: 1px solid #1d74e8; border-radius: 4px; }
.cursor { position: absolute; left: 27px; width: 1px; height: 16px; background: #fff; }
.hits { position: absolute; left: 63px; top: 27px; width: 200px; background: #363a43; border-radius: 0 0 4px 4px; }
.hits li { height: 24px; padding: 0 4px; line-height: 24px; white-space: nowrap; }
.hits .on { height: 28px; padding: 0 6px; line-height: 26px; background: #2a62b9; border: 1px solid #5c6370; border-radius: 2px; }
.hits b { color: #00e08a; font-weight: 700; }

/* view tools */
.view { position: absolute; right: 0; top: 40px; bottom: 0; width: 24px; overflow: hidden; display: flex; flex-direction: column; align-items: center; background: #414554; border-radius: 4px 0 0 0; }
.view button { flex: none; width: 24px; height: 24px; display: grid; place-items: center; }
.view svg { width: 20px; height: 20px; }
.view .menu { height: 40px; align-content: center; }
.view .menu svg { width: 24px; height: 24px; }
.view .caret { margin-top: 2px; }
```
